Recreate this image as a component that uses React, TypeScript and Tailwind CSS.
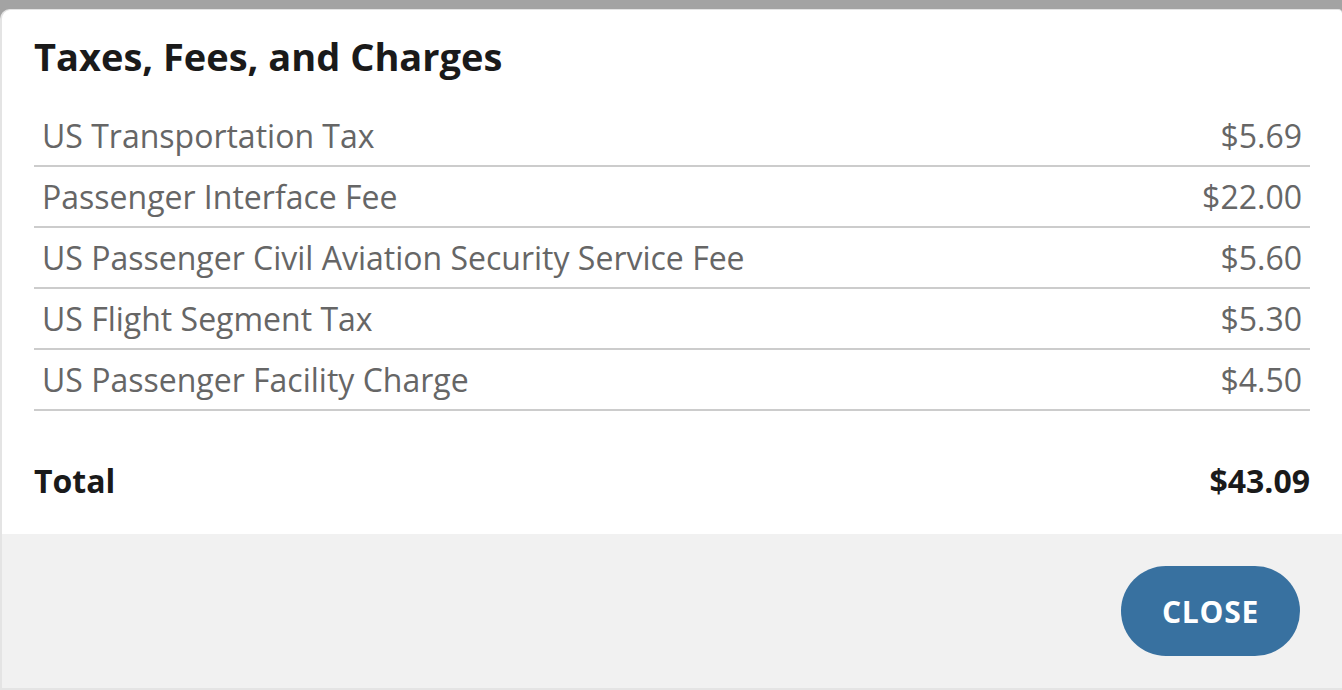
import React from "react";

const fees = [
  { label: "US Transportation Tax", amount: "$5.69" },
  { label: "Passenger Interface Fee", amount: "$22.00" },
  { label: "US Passenger Civil Aviation Security Service Fee", amount: "$5.60" },
  { label: "US Flight Segment Tax", amount: "$5.30" },
  { label: "US Passenger Facility Charge", amount: "$4.50" },
];

const App = () => {
  return (
    <div
      className="w-full h-[690px] bg-[#a3a3a3] pt-[9px] overflow-hidden"
      style={{ fontFamily: '"Open Sans", sans-serif' }}
    >
      <div className="h-[681px] flex flex-col bg-white border-t border-l-2 border-b-2 border-[#e4e4e4] rounded-tl-[10px] rounded-tr-[4px]">
        {/* Body */}
        <div className="flex-1 px-[32px] pt-[23px]">
          <h2 className="text-[38px] leading-[46px] font-bold text-[#1a1a1a] mb-[27px]">
            Taxes, Fees, and Charges
          </h2>

          <div className="flex flex-col">
            {fees.map((fee, index) => (
              <div
                key={index}
                className="h-[61px] flex items-center justify-between px-[8px] border-b-2 border-[#cccccc] text-[32px] text-[#666666]"
              >
                <span>{fee.label}</span>
                <span>{fee.amount}</span>
              </div>
            ))}
          </div>

          <div className="pt-[48px] flex items-center justify-between text-[32px] leading-[44px] font-bold text-[#1a1a1a]">
            <span>Total</span>
            <span>$43.09</span>
          </div>
        </div>

        {/* Footer */}
        <div className="h-[154px] bg-[#f1f1f1] flex items-center justify-end pr-[42px]">
          <button className="w-[179px] h-[90px] rounded-full bg-[#3871a0] text-white text-[30px] font-bold tracking-wide">
            CLOSE
          </button>
        </div>
      </div>
    </div>
  );
};

export default App;
